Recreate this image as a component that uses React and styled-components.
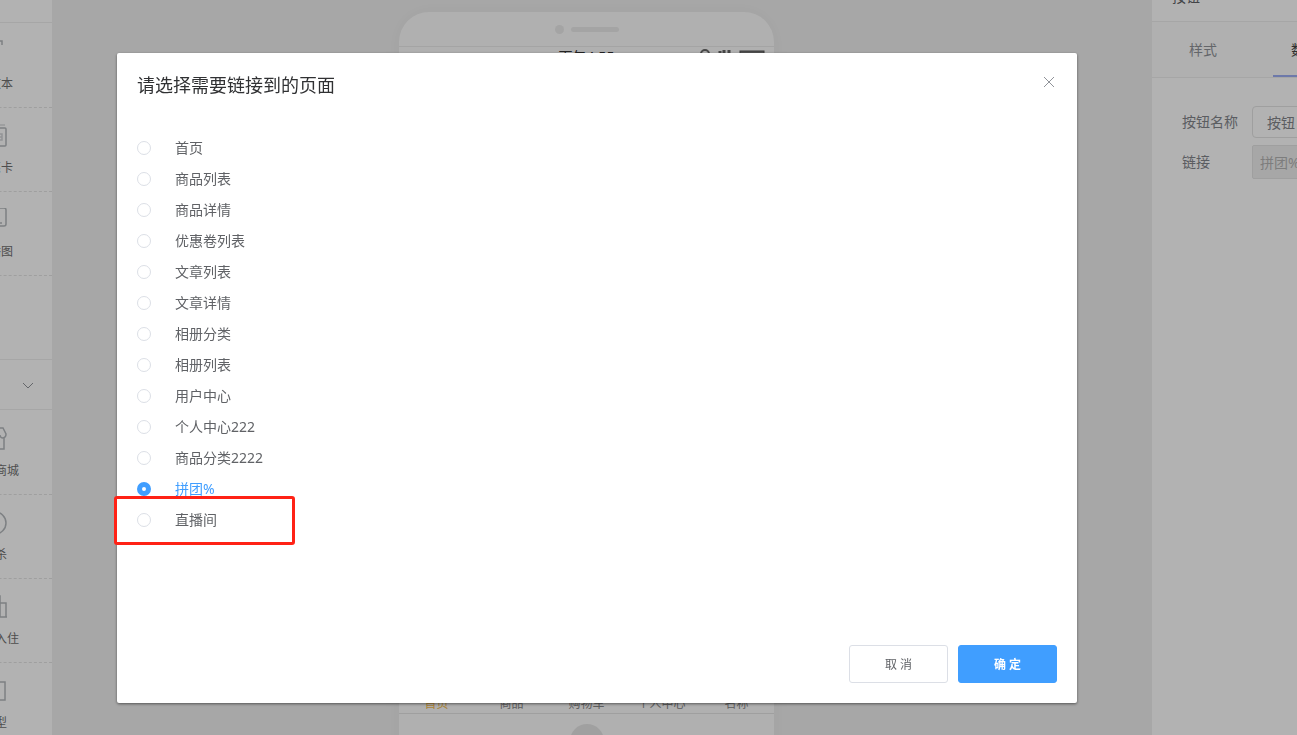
import React, { useState } from "react";
import styled, { createGlobalStyle } from "styled-components";

const pages = [
  "首页",
  "商品列表",
  "商品详情",
  "优惠卷列表",
  "文章列表",
  "文章详情",
  "相册分类",
  "相册列表",
  "用户中心",
  "个人中心222",
  "商品分类2222",
  "拼团%",
  "直播间",
];

const baseWidgets = [
  { id: "text", title: "富文本", icon: <path d="M1 5V1h18v4M10 1v20M6 21h8" /> },
  {
    id: "card",
    title: "优惠卡",
    icon: (
      <>
        <path d="M2 1h20" opacity="0.5" />
        <rect x="1" y="4" width="22" height="18" rx="1" />
        <path d="M6 10h4v6H6zM14 10h5v6h-5M15 13h4" opacity="0.6" />
      </>
    ),
  },
  {
    id: "banner",
    title: "轮播图",
    icon: (
      <>
        <rect x="1" y="0" width="22" height="18" rx="2" />
        <path d="M8 15h11" />
      </>
    ),
  },
];

const shopWidgets = [
  {
    id: "mall",
    title: "积分商城",
    icon: (
      <path d="M3 11v11h18V11M4 1h16l3 6c0 5-6 5-6 1 0 4-5 4-5 0 0 4-5 4-5 0 0 4-6 4-6-1z" />
    ),
  },
  { id: "seckill", title: "秒杀", icon: <><circle cx="12" cy="12" r="11" /><path d="M12 5v7l4 3" /></> },
  {
    id: "settle",
    title: "商家入住",
    icon: <path d="M1 22h23M4 22V8h6M10 22V1h7v21M17 8h6v14" />,
  },
  { id: "model", title: "模型", icon: <rect x="2" y="3" width="20" height="18" /> },
];

const tabs = ["首页", "商品", "购物车", "个人中心", "名称"];

function WidgetList({ items }) {
  return (
    <Widgets>
      {items.map((item) => (
        <Widget key={item.id}>
          <WidgetIcon viewBox="0 0 24 24">{item.icon}</WidgetIcon>
          <span>{item.title}</span>
        </Widget>
      ))}
    </Widgets>
  );
}

function Sidebar() {
  return (
    <SidebarStyled>
      <SidebarInner>
        <GroupTop />
        <WidgetList items={baseWidgets} />
        <GroupSpace />
        <GroupToggle type="button" aria-label="展开">
          <svg width="12" height="12" viewBox="0 0 12 12">
            <path d="M1 4l5 5 5-5" fill="none" stroke="#909399" />
          </svg>
        </GroupToggle>
        <WidgetList items={shopWidgets} />
      </SidebarInner>
    </SidebarStyled>
  );
}

function Phone() {
  return (
    <PhoneStyled>
      <PhoneTop>
        <Camera />
        <Speaker />
      </PhoneTop>
      <Screen>
        <StatusBar>
          <span />
          <span>下午4:55</span>
          <svg width="68" height="14" viewBox="0 0 68 14">
            <circle cx="8" cy="7" r="4" fill="none" stroke="#666" strokeWidth="2" />
            <path d="M23 4v8M27 3v9M32 3v9" stroke="#666" strokeWidth="3" />
            <rect x="43" y="4" width="24" height="10" fill="#777" stroke="#555" />
          </svg>
        </StatusBar>
        <TabBar>
          {tabs.map((tab, i) => (
            <Tab key={tab} $active={i === 0}>
              {tab}
            </Tab>
          ))}
        </TabBar>
      </Screen>
      <PhoneBottom>
        <HomeKey />
      </PhoneBottom>
    </PhoneStyled>
  );
}

function Settings() {
  return (
    <SettingsStyled>
      <SettingsTitle>按钮</SettingsTitle>
      <SettingsTabs>
        <SettingsTab type="button">样式</SettingsTab>
        <SettingsTab type="button" $active>
          数据
        </SettingsTab>
      </SettingsTabs>
      <Form>
        <Field>
          <label htmlFor="btn-name">按钮名称</label>
          <NameInput id="btn-name" defaultValue="按钮" />
        </Field>
        <Field>
          <label htmlFor="btn-link">链接</label>
          <LinkInput id="btn-link" defaultValue="拼团%" disabled />
        </Field>
      </Form>
    </SettingsStyled>
  );
}

function App() {
  const [selected, setSelected] = useState("拼团%");

  return (
    <>
      <GlobalStyle />
      <Page>
        <Sidebar />
        <Canvas>
          <Phone />
        </Canvas>
        <Settings />
      </Page>
      <Overlay>
        <Dialog role="dialog" aria-labelledby="dialog-title">
          <DialogHeader>
            <h2 id="dialog-title">请选择需要链接到的页面</h2>
            <Close type="button" aria-label="关闭">
              <svg width="16" height="18" viewBox="0 0 16 18">
                <path d="M3 4l10 10M13 4L3 14" stroke="#909399" />
              </svg>
            </Close>
          </DialogHeader>
          <PageList>
            {pages.map((name) => (
              <PageRow key={name}>
                <PageOption $checked={name === selected}>
                  <Radio
                    name="page"
                    checked={name === selected}
                    onChange={() => setSelected(name)}
                  />
                  <span>{name}</span>
                </PageOption>
                {name === "直播间" && <Highlight />}
              </PageRow>
            ))}
          </PageList>
          <DialogFooter>
            <Button type="button">取 消</Button>
            <Button type="button" $primary>
              确 定
            </Button>
          </DialogFooter>
        </Dialog>
      </Overlay>
    </>
  );
}

const GlobalStyle = createGlobalStyle`
  * {
    box-sizing: border-box;
  }
  body {
    margin: 0;
    overflow: hidden;
    background: #f0f0f0;
    color: #606266;
    font-family: "Noto Sans", "Noto Sans CJK SC", sans-serif;
    font-size: 14px;
    line-height: 20px;
  }
  button,
  input {
    font: inherit;
    color: inherit;
  }
`;

const Page = styled.div`
  display: flex;
  height: 100vh;
  overflow: hidden;
`;

const SidebarStyled = styled.aside`
  width: 52px;
  flex-shrink: 0;
  display: flex;
  justify-content: flex-end;
  background: #fff;
  overflow: hidden;
`;

const SidebarInner = styled.div`
  width: 114px;
  flex-shrink: 0;
`;

const GroupTop = styled.div`
  height: 23px;
  border-bottom: 1px solid #eee;
`;

const GroupSpace = styled.div`
  height: 84px;
  border-bottom: 1px solid #eee;
`;

const GroupToggle = styled.button`
  display: flex;
  align-items: center;
  justify-content: flex-end;
  width: 100%;
  height: 50px;
  padding: 0 18px;
  border: 0;
  border-bottom: 1px solid #eee;
  background: none;
`;

const Widgets = styled.ul`
  margin: 0;
  padding: 1px 0 0;
  list-style: none;
`;

const Widget = styled.li`
  display: flex;
  flex-direction: column;
  align-items: center;
  gap: 10px;
  height: 84px;
  padding-top: 16px;
  border-bottom: 1px dashed #e4e4e4;
  font-size: 12px;
  color: #707070;
`;

const WidgetIcon = styled.svg`
  width: 24px;
  height: 24px;
  flex-shrink: 0;
  fill: none;
  stroke: #b4b8bc;
  stroke-width: 1.5;
`;

const Canvas = styled.main`
  flex: 1;
  display: flex;
  justify-content: center;
  align-items: flex-start;
  padding: 12px 31px 0 0;
`;

const PhoneStyled = styled.div`
  width: 375px;
  flex-shrink: 0;
  border-radius: 30px;
  background: #fcfcfc;
  box-shadow: 0 0 20px rgba(0, 0, 0, 0.04);
`;

const PhoneTop = styled.div`
  display: flex;
  align-items: center;
  justify-content: center;
  gap: 7px;
  height: 35px;
  border-bottom: 1px solid #ebebeb;
`;

const Camera = styled.div`
  width: 9px;
  height: 9px;
  border-radius: 50%;
  background: #ebebeb;
`;

const Speaker = styled.div`
  width: 48px;
  height: 5px;
  border-radius: 3px;
  background: #ebebeb;
`;

const Screen = styled.div`
  display: flex;
  flex-direction: column;
  justify-content: space-between;
  height: 667px;
  border-bottom: 1px solid #e4e4e4;
`;

const StatusBar = styled.div`
  display: grid;
  grid-template-columns: 1fr auto 1fr;
  padding: 0 9px;
  color: #333;

  svg {
    justify-self: end;
  }
`;

const TabBar = styled.div`
  display: flex;
`;

const Tab = styled.div`
  flex: 1;
  font-size: 12px;
  line-height: 18px;
  text-align: center;
  color: ${(props) => (props.$active ? "#f5bd50" : "#888")};
`;

const PhoneBottom = styled.div`
  display: flex;
  justify-content: center;
  padding: 10px 0 16px;
`;

const HomeKey = styled.div`
  width: 34px;
  height: 34px;
  border-radius: 50%;
  background: #e6e6e6;
`;

const SettingsStyled = styled.aside`
  width: 145px;
  flex-shrink: 0;
  margin-top: -30px;
  background: #fff;
  overflow: hidden;
`;

const SettingsTitle = styled.div`
  display: flex;
  align-items: center;
  height: 52px;
  padding: 2px 20px 0;
  border-bottom: 1px solid #eee;
`;

const SettingsTabs = styled.div`
  display: flex;
  gap: 38px;
  height: 56px;
  padding-left: 19px;
  background: #fcfcfc;
  border-bottom: 1px solid #eee;
`;

const SettingsTab = styled.button`
  flex-shrink: 0;
  padding: 2px 18px 0;
  border: 0;
  border-bottom: 2px solid ${(props) => (props.$active ? "#9caef4" : "transparent")};
  background: none;
  color: ${(props) => (props.$active ? "#444" : "#909399")};
`;

const Form = styled.div`
  display: flex;
  flex-direction: column;
  gap: 7px;
  padding: 28px 0 0 30px;
`;

const Field = styled.div`
  display: flex;
  align-items: center;
  gap: 14px;
  color: #83868c;

  label {
    width: 56px;
    flex-shrink: 0;
  }
`;

const NameInput = styled.input`
  width: 180px;
  height: 32px;
  flex-shrink: 0;
  padding: 0 14px;
  border: 1px solid #e4e4e4;
  border-radius: 4px;
  background: #fff;
`;

const LinkInput = styled(NameInput)`
  height: 34px;
  padding: 0 7px;
  border-radius: 2px;
  background: #f0f0f0;
  color: #b4b4b4;
`;

const Overlay = styled.div`
  position: fixed;
  inset: 0;
  display: flex;
  padding: 53px 220px 32px 117px;
  background: rgba(0, 0, 0, 0.3);
`;

const Dialog = styled.section`
  flex: 1;
  display: flex;
  flex-direction: column;
  padding: 20px;
  border-radius: 2px;
  background: #fff;
  box-shadow: 0 1px 3px rgba(0, 0, 0, 0.5);
`;

const DialogHeader = styled.header`
  display: flex;
  justify-content: space-between;
  align-items: flex-start;

  h2 {
    margin: 0;
    font-size: 18px;
    font-weight: 400;
    line-height: 24px;
    color: #303133;
  }
`;

const Close = styled.button`
  display: flex;
  padding: 0;
  border: 0;
  background: none;
  cursor: pointer;
`;

const PageList = styled.ul`
  flex: 1;
  margin: 0;
  padding: 35px 0 0;
  list-style: none;
`;

const PageRow = styled.li`
  position: relative;
  display: flex;
`;

const PageOption = styled.label`
  display: flex;
  align-items: center;
  gap: 24px;
  height: 31px;
  color: ${(props) => (props.$checked ? "#409eff" : "#606266")};
  cursor: pointer;
`;

const Radio = styled.input.attrs({ type: "radio" })`
  appearance: none;
  width: 14px;
  height: 14px;
  margin: 0;
  border: 1px solid #dcdfe6;
  border-radius: 50%;
  background: #fff;

  &:checked {
    border: 5px solid #409eff;
  }
`;

const Highlight = styled.div`
  position: absolute;
  top: -8px;
  bottom: -10px;
  left: -23px;
  width: 181px;
  border: 3px solid #ff2216;
  border-radius: 3px;
  pointer-events: none;
`;

const DialogFooter = styled.footer`
  display: flex;
  justify-content: flex-end;
  gap: 10px;
`;

const Button = styled.button`
  width: 99px;
  height: 38px;
  padding: 2px 0 0;
  border: 1px solid ${(props) => (props.$primary ? "#409eff" : "#dcdfe6")};
  border-radius: 3px;
  background: ${(props) => (props.$primary ? "#409eff" : "#fff")};
  color: ${(props) => (props.$primary ? "#fff" : "#606266")};
  font-size: 12px;
  font-weight: ${(props) => (props.$primary ? 700 : 400)};
  cursor: pointer;
`;

export default App;
